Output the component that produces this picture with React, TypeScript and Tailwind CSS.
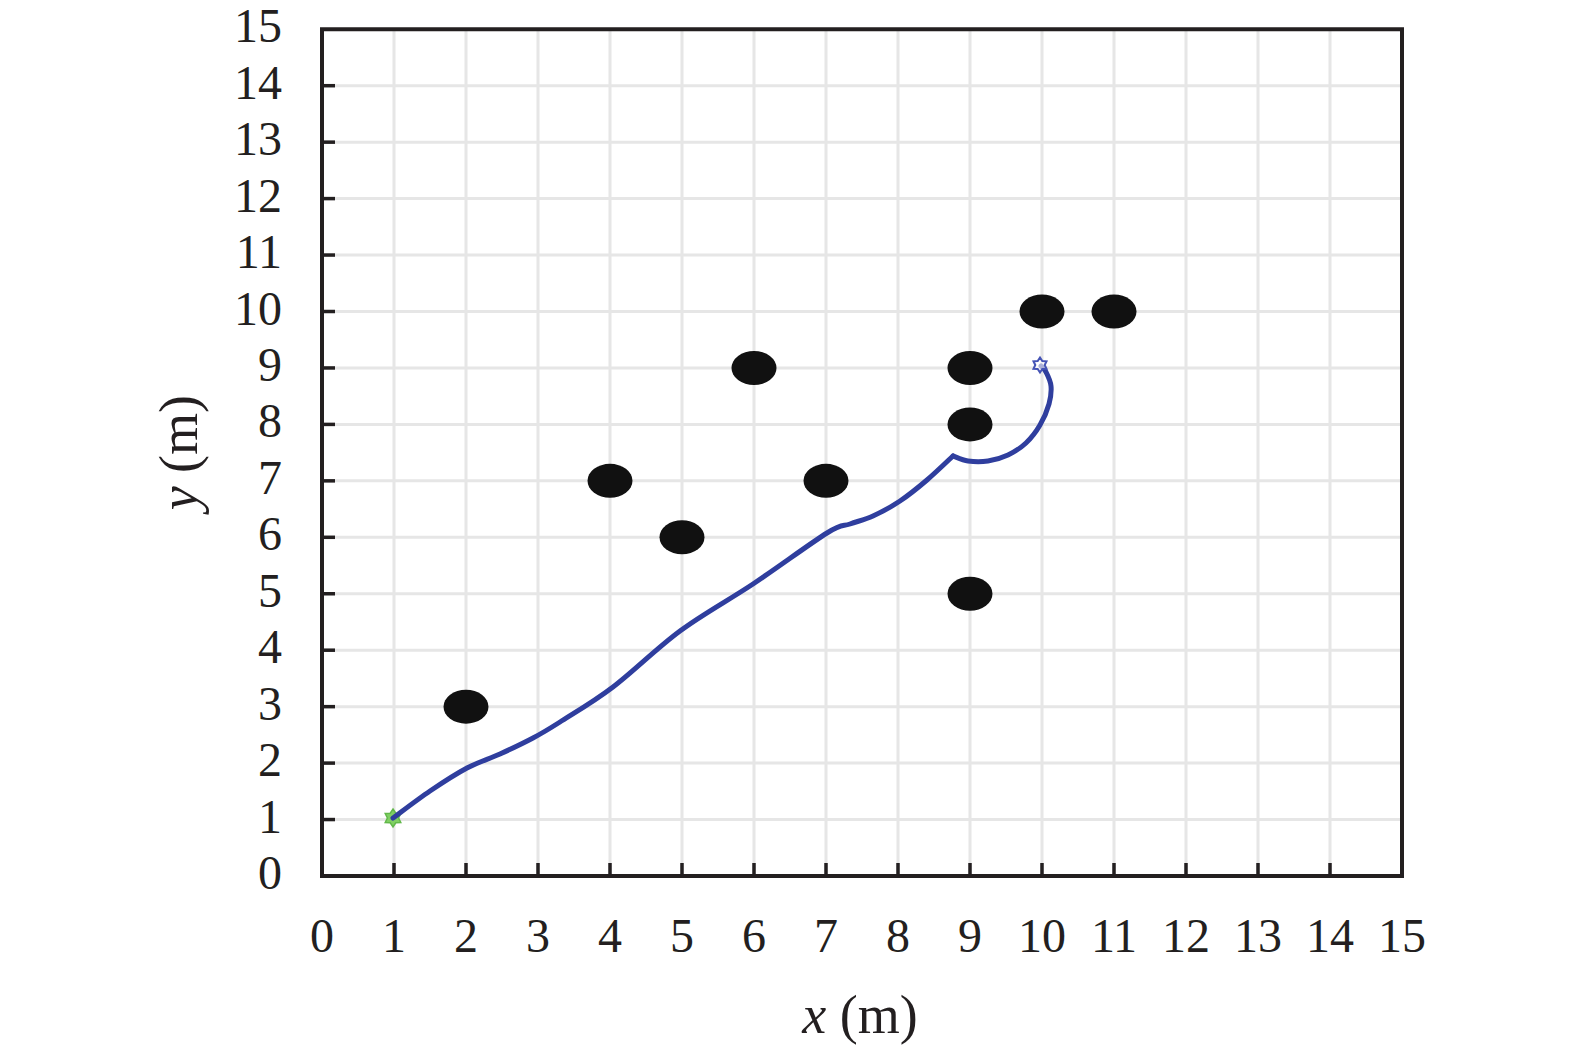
import React from 'react';

const X0 = 322;
const Y0 = 876;
const DX = 72;
const DY = 56.45;
const px = (v: number) => X0 + v * DX;
const py = (v: number) => Y0 - v * DY;

const ticks = Array.from({ length: 16 }, (_, i) => i);

const obstacles: [number, number][] = [
  [2, 3], [4, 7], [5, 6], [6, 9], [7, 7], [9, 9], [9, 8], [9, 5], [10, 10], [11, 10],
];

// traced robot path, pixel coords (split at the kink near the 9,8 obstacle)
const legA: [number, number][] = [
  [393, 818], [430, 791], [467, 768], [500, 754], [533, 738], [560, 722], [613, 687],
  [680, 631], [753, 584], [827, 533], [850, 524], [873, 516],
  [900, 501], [927, 480], [953, 456],
];
const legB: [number, number][] = [
  [953, 456], [968, 461], [988, 461],
  [1008, 455], [1026, 443], [1040, 425], [1049, 404], [1051, 386], [1046, 372],
  [1041, 366],
];

function smooth(p: [number, number][]) {
  let d = `M${p[0][0]},${p[0][1]}`;
  for (let i = 0; i < p.length - 1; i++) {
    const a = p[Math.max(i - 1, 0)];
    const b = p[i];
    const c = p[i + 1];
    const e = p[Math.min(i + 2, p.length - 1)];
    const c1x = b[0] + (c[0] - a[0]) / 6;
    const c1y = b[1] + (c[1] - a[1]) / 6;
    const c2x = c[0] - (e[0] - b[0]) / 6;
    const c2y = c[1] - (e[1] - b[1]) / 6;
    d += ` C${c1x.toFixed(1)},${c1y.toFixed(1)} ${c2x.toFixed(1)},${c2y.toFixed(1)} ${c[0]},${c[1]}`;
  }
  return d;
}

function star(cx: number, cy: number, r: number, n: number, inner: number) {
  const pts: string[] = [];
  for (let i = 0; i < n * 2; i++) {
    const rr = i % 2 === 0 ? r : r * inner;
    const a = -Math.PI / 2 + (i * Math.PI) / n;
    pts.push(`${(cx + rr * Math.cos(a)).toFixed(1)},${(cy + rr * Math.sin(a)).toFixed(1)}`);
  }
  return pts.join(' ');
}

export default function App() {
  return (
    <div className="w-[1575px] h-[1055px] bg-white">
      <svg
        width="1575"
        height="1055"
        viewBox="0 0 1575 1055"
        className="block"
        style={{ fontFamily: '"Liberation Serif", "Times New Roman", serif' }}
      >
        {/* grid */}
        {ticks.slice(1, 15).map((i) => (
          <g key={`g${i}`}>
            <line x1={px(i)} y1={py(15)} x2={px(i)} y2={Y0} stroke="#e6e6e6" strokeWidth={3} />
            <line x1={X0} y1={py(i)} x2={px(15)} y2={py(i)} stroke="#e6e6e6" strokeWidth={3} />
          </g>
        ))}

        {/* ticks */}
        {ticks.slice(1, 15).map((i) => (
          <g key={`t${i}`} stroke="#231f20" strokeWidth={3.5}>
            <line x1={X0} y1={py(i)} x2={X0 + 13} y2={py(i)} />
            <line x1={px(i)} y1={Y0} x2={px(i)} y2={Y0 - 13} />
          </g>
        ))}

        {/* frame */}
        <rect
          x={X0}
          y={py(15)}
          width={15 * DX}
          height={15 * DY}
          fill="none"
          stroke="#231f20"
          strokeWidth={4}
        />

        {/* obstacles */}
        {obstacles.map(([x, y]) => (
          <ellipse key={`o${x}-${y}`} cx={px(x)} cy={py(y)} rx={22.5} ry={17} fill="#111111" />
        ))}

        {/* start marker below path */}
        <polygon points={star(393, 818, 9, 6, 0.62)} fill="#7fcf62" stroke="#62b84a" strokeWidth={1.5} />

        {/* path */}
        <g fill="none" stroke="#2f3e9e" strokeWidth={5} strokeLinejoin="round" strokeLinecap="round">
          <path d={smooth(legA)} />
          <path d={smooth(legB)} />
        </g>

        {/* goal marker */}
        <polygon points={star(1040, 365, 7.5, 6, 0.62)} fill="#ffffff" fillOpacity={0.6} stroke="#4453b5" strokeWidth={2} />

        {/* y tick labels */}
        {ticks.map((i) => (
          <text
            key={`yl${i}`}
            x={282}
            y={py(i) + 13}
            textAnchor="end"
            fontSize={48}
            fill="#231f20"
          >
            {i}
          </text>
        ))}

        {/* x tick labels */}
        {ticks.map((i) => (
          <text
            key={`xl${i}`}
            x={px(i)}
            y={952}
            textAnchor="middle"
            fontSize={48}
            fill="#231f20"
          >
            {i}
          </text>
        ))}

        {/* axis titles */}
        <text x={860} y={1033} textAnchor="middle" fontSize={54} fill="#231f20">
          <tspan fontStyle="italic">x</tspan> (m)
        </text>
        <text
          x={0}
          y={0}
          transform={`translate(197 ${py(7.5)}) rotate(-90)`}
          textAnchor="middle"
          fontSize={54}
          fill="#231f20"
        >
          <tspan fontStyle="italic">y</tspan> (m)
        </text>
      </svg>
    </div>
  );
}
